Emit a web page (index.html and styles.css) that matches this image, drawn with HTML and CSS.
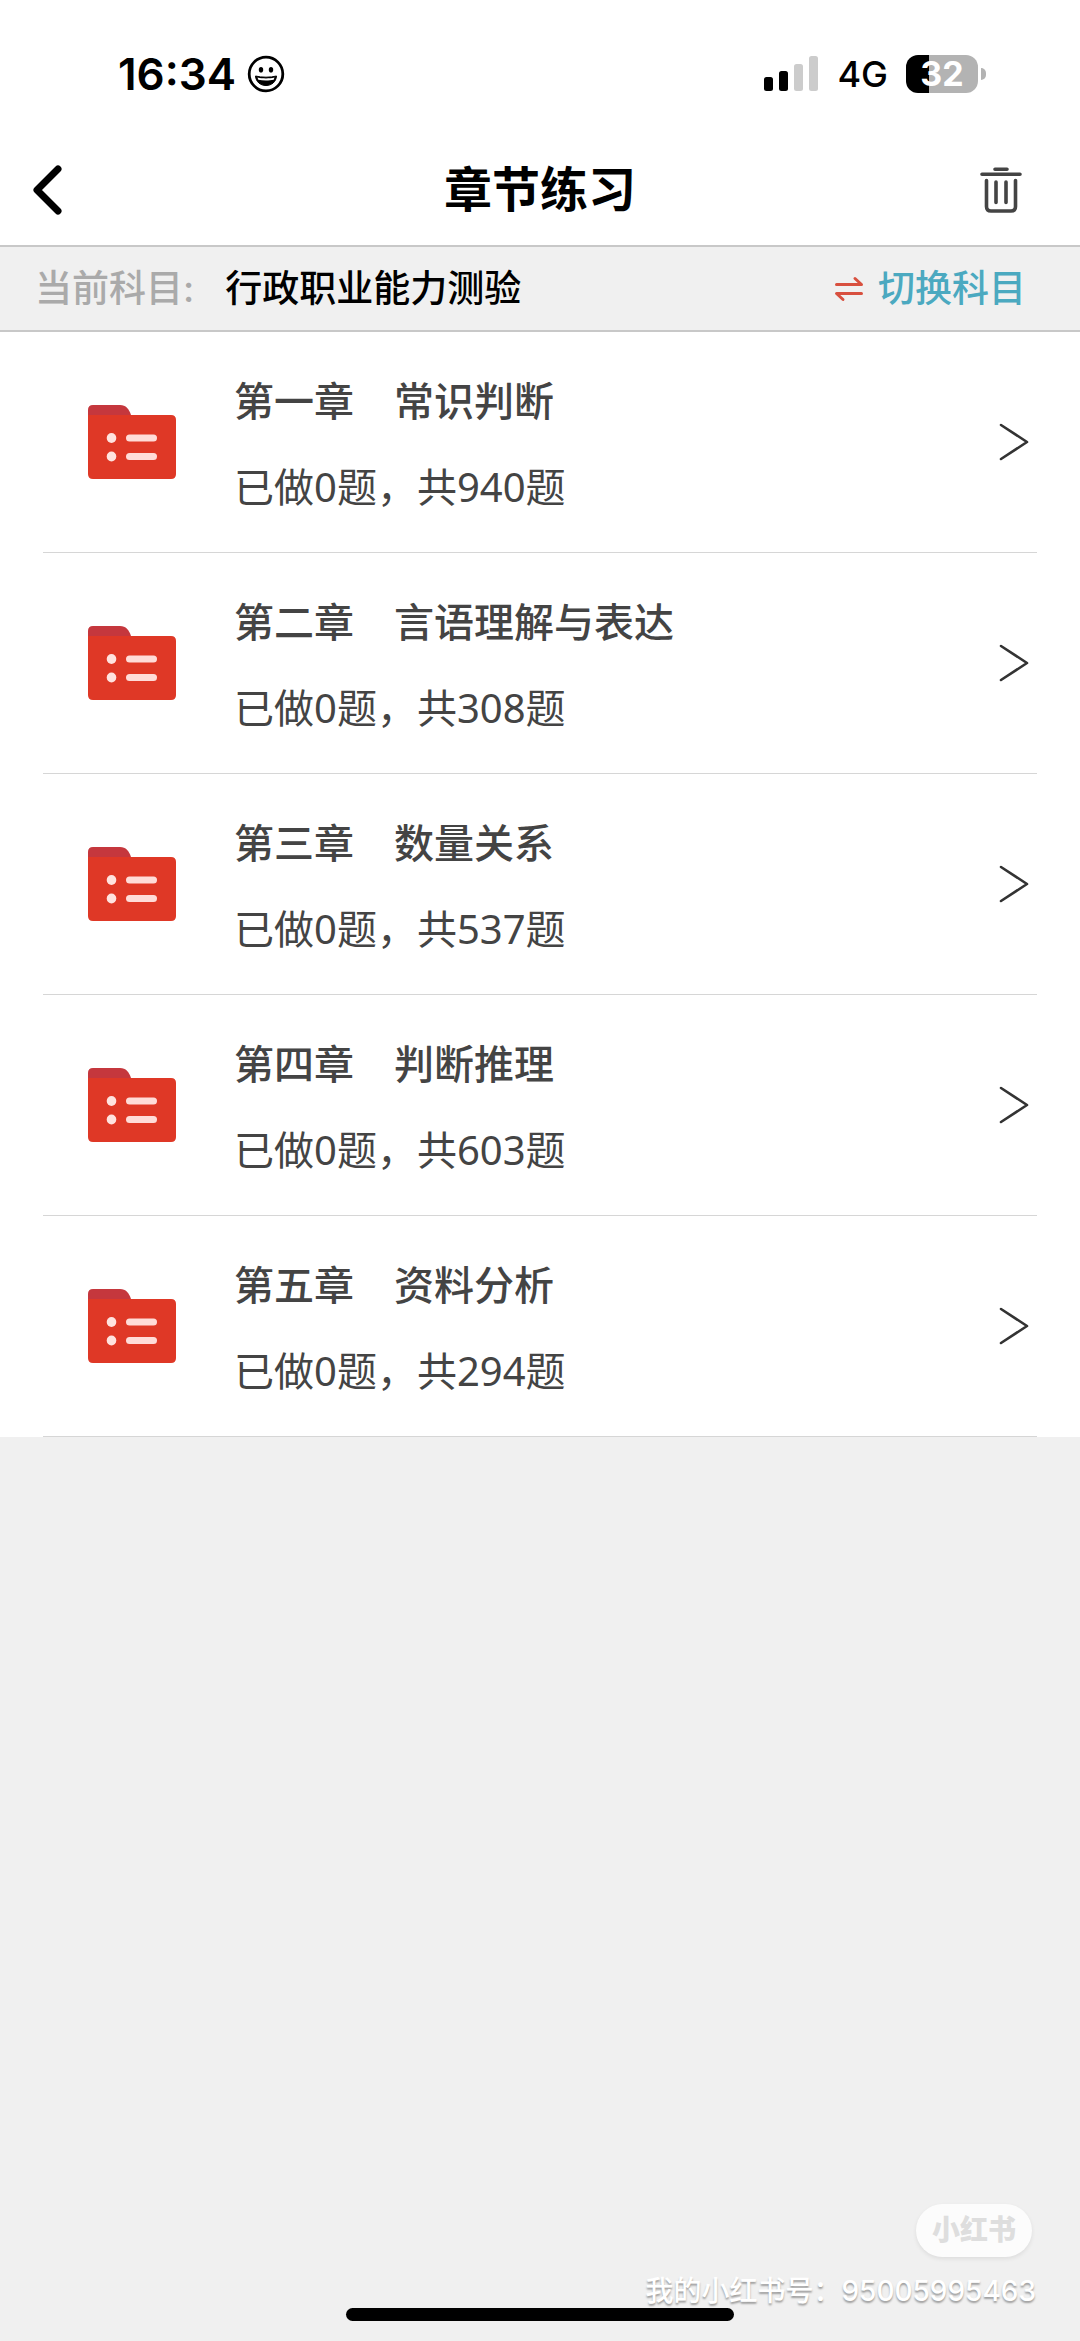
FILE: index.html
```
<!DOCTYPE html>
<html lang="zh-CN">
<head>
    <meta charset="UTF-8">
    <meta name="viewport" content="width=device-width, initial-scale=1.0">
    <title>章节练习</title>
    <link rel="stylesheet" href="styles.css">
</head>
<body>

    <header class="top">
        <div class="status-bar">
            <div class="status-left">
                <span class="time">16:34</span>
                <svg width="38" height="38" viewBox="0 0 38 38" fill="none">
                    <circle cx="19" cy="19" r="16.8" stroke="#000" stroke-width="2.8"/>
                    <ellipse cx="14" cy="14.8" rx="2.2" ry="2.8" fill="#000"/>
                    <ellipse cx="24" cy="14.8" rx="2.2" ry="2.8" fill="#000"/>
                    <path d="M8.5 21c6 1.6 15 1.6 21 0-.5 6-5 9.500-10.500 9.500S9 27 8.500 21z" fill="#000" stroke="#000" stroke-linejoin="round"/>
                    <path d="M10.500 22.500c5 1.200 12 1.200 17 0l-.8 2.200c-4.500 1-10.900 1-15.400 0z" fill="#fff"/>
                </svg>
            </div>
            <div class="status-right">
                <svg width="55" height="36" viewBox="0 0 55 36">
                    <rect x="0" y="21" width="9" height="14" rx="2.500"/>
                    <rect x="15" y="15" width="9" height="20" rx="2.500"/>
                    <rect x="30" y="8" width="9" height="27" rx="2.500" fill="#ccc"/>
                    <rect x="45" y="0" width="9" height="35" rx="2.500" fill="#ccc"/>
                </svg>
                <span class="network">4G</span>
                <div class="battery"><span class="battery-level">32</span></div>
            </div>
        </div>

        <div class="nav-bar">
            <button class="icon-btn" type="button" aria-label="返回">
                <svg width="32" height="52" viewBox="0 0 32 52" fill="none" stroke="#000" stroke-width="7" stroke-linecap="round" stroke-linejoin="round">
                    <path d="M26 5L5 26l21 21"/>
                </svg>
            </button>
            <h1>章节练习</h1>
            <button class="icon-btn icon-btn-right" type="button" aria-label="清空">
                <svg width="42" height="46" viewBox="0 0 42 46" fill="none" stroke="#444" stroke-width="3.600" stroke-linecap="round" stroke-linejoin="round">
                    <path d="M15 2.300h12M2 7.300h38"/>
                    <path d="M6.500 13.500v26q0 4.500 4.500 4.500h20q4.500 0 4.500-4.500v-26"/>
                    <path d="M16 15v20.500M26 15v20.500"/>
                </svg>
            </button>
        </div>
    </header>

    <section class="subject-bar">
        <span class="subject-label">当前科目:</span>
        <strong class="subject-name">行政职业能力测验</strong>
        <a class="switch" href="#">
            <svg width="28" height="26" viewBox="0 0 28 26" fill="none" stroke="#d8503f" stroke-width="3" stroke-linecap="round" stroke-linejoin="round">
                <path d="M1.500 8.500h25l-6.500-6"/>
                <path d="M26.500 17.500h-25l6.500 6"/>
            </svg>
            切换科目
        </a>
    </section>

    <main>
        <ul class="chapter-list">
            <li>
                <a class="chapter" href="#">
                    <svg class="folder" viewBox="0 0 88 75"><use href="#folder"/></svg>
                    <div class="chapter-info">
                        <h2>第一章　常识判断</h2>
                        <p>已做0题，共940题</p>
                    </div>
                    <svg class="arrow" viewBox="0 0 30 38"><use href="#arrow"/></svg>
                </a>
            </li>
            <li>
                <a class="chapter" href="#">
                    <svg class="folder" viewBox="0 0 88 75"><use href="#folder"/></svg>
                    <div class="chapter-info">
                        <h2>第二章　言语理解与表达</h2>
                        <p>已做0题，共308题</p>
                    </div>
                    <svg class="arrow" viewBox="0 0 30 38"><use href="#arrow"/></svg>
                </a>
            </li>
            <li>
                <a class="chapter" href="#">
                    <svg class="folder" viewBox="0 0 88 75"><use href="#folder"/></svg>
                    <div class="chapter-info">
                        <h2>第三章　数量关系</h2>
                        <p>已做0题，共537题</p>
                    </div>
                    <svg class="arrow" viewBox="0 0 30 38"><use href="#arrow"/></svg>
                </a>
            </li>
            <li>
                <a class="chapter" href="#">
                    <svg class="folder" viewBox="0 0 88 75"><use href="#folder"/></svg>
                    <div class="chapter-info">
                        <h2>第四章　判断推理</h2>
                        <p>已做0题，共603题</p>
                    </div>
                    <svg class="arrow" viewBox="0 0 30 38"><use href="#arrow"/></svg>
                </a>
            </li>
            <li>
                <a class="chapter" href="#">
                    <svg class="folder" viewBox="0 0 88 75"><use href="#folder"/></svg>
                    <div class="chapter-info">
                        <h2>第五章　资料分析</h2>
                        <p>已做0题，共294题</p>
                    </div>
                    <svg class="arrow" viewBox="0 0 30 38"><use href="#arrow"/></svg>
                </a>
            </li>
        </ul>
    </main>

    <footer class="footer">
        <span class="badge">小红书</span>
        <p class="account">我的小红书号：95005995463</p>
        <div class="home-indicator"></div>
    </footer>

    <!-- shared icons -->
    <svg class="sprite" width="0" height="0" aria-hidden="true">
        <symbol id="folder" viewBox="0 0 88 75">
            <path d="M0 16V5q0-5 5-5h27c6 0 9 4 11 10v6z" fill="#c5373d"/>
            <path d="M0 10h83q5 0 5 5v54q0 5-5 5H5q-5 0-5-5z" fill="#df3826"/>
            <ellipse cx="23.500" cy="33" rx="4.800" ry="5" fill="#ffe3df"/>
            <ellipse cx="23.500" cy="51.500" rx="4.800" ry="5" fill="#ffe3df"/>
            <rect x="38" y="29.500" width="31" height="7" rx="3.500" fill="#ffdcd8"/>
            <rect x="38" y="48" width="31" height="7" rx="3.500" fill="#ffdcd8"/>
        </symbol>
        <symbol id="arrow" viewBox="0 0 30 38">
            <path d="M2 2l26 17L2 36" fill="none" stroke="#333" stroke-width="2.600" stroke-linecap="round" stroke-linejoin="round"/>
        </symbol>
    </svg>

</body>
</html>
```
FILE: styles.css
```
:root {
    --background-color: #f0f0f0;
    --card-background: #ffffff;
    --text-color: #444;
    --subtle-text-color: #aaa;
    --border-color: #c8c8c8;
    --line-color: #d6d6d6;
    --link-color: #4ba9c0;
}

* {
    box-sizing: border-box;
    margin: 0;
    padding: 0;
}

body {
    font-family: Inter, 'Noto Sans CJK SC', sans-serif;
    background-color: var(--background-color);
    color: var(--text-color);
    display: flex;
    flex-direction: column;
    min-height: 100vh;
}

a {
    color: inherit;
    text-decoration: none;
}

svg {
    display: block;
    flex-shrink: 0;
}

.sprite {
    position: absolute;
}

.top {
    background-color: var(--card-background);
    color: #000;
}

/* status bar */
.status-bar {
    display: flex;
    justify-content: space-between;
    align-items: center;
    padding: 44px 102px 30px 118px;
}

.status-left,
.status-right {
    display: flex;
    align-items: center;
    line-height: 60px;
}

.status-left {
    gap: 11px;
}

.status-right {
    gap: 18px;
}

.time {
    font-size: 44px;
    font-weight: 600;
}

.network {
    font-size: 36px;
    font-weight: 500;
}

.battery {
    position: relative;
}

.battery::after {
    content: "";
    position: absolute;
    left: calc(100% + 3px);
    top: 50%;
    width: 5px;
    height: 12px;
    margin-top: -6px;
    border-radius: 0 6px 6px 0;
    background-color: #b3b3b3;
}

.battery-level {
    display: block;
    width: 72px;
    border-radius: 12px;
    background: linear-gradient(to right, #000 32%, #b3b3b3 32%);
    color: #fff;
    font-size: 34px;
    font-weight: 700;
    line-height: 38px;
    text-align: center;
}

/* nav bar */
.nav-bar {
    display: grid;
    grid-template-columns: 1fr auto 1fr;
    align-items: center;
    padding: 20px 32px;
}

.nav-bar h1 {
    font-size: 48px;
    font-weight: 700;
    line-height: 71px;
}

.icon-btn {
    justify-self: start;
    border: none;
    background: none;
    cursor: pointer;
}

.icon-btn-right {
    justify-self: end;
    padding-right: 26px;
}

/* current subject */
.subject-bar {
    display: flex;
    align-items: center;
    padding: 13px 54px 12px 35px;
    border-top: 2px solid var(--border-color);
    border-bottom: 2px solid var(--border-color);
    font-size: 37px;
    font-weight: 500;
    line-height: 58px;
}

.subject-label {
    color: var(--subtle-text-color);
}

.subject-name {
    margin-left: 31px;
    color: #000;
    font-weight: 500;
}

.switch {
    display: flex;
    align-items: center;
    gap: 15px;
    margin-left: auto;
    color: var(--link-color);
}

/* chapters */
.chapter-list {
    list-style: none;
    background-color: var(--card-background);
    padding: 0 43px;
}

.chapter {
    display: flex;
    align-items: center;
    padding: 35px 8px 35px 45px;
    border-bottom: 1px solid var(--line-color);
}

.folder {
    width: 88px;
    height: 75px;
}

.chapter-info {
    flex: 1;
    margin-left: 58px;
    padding-top: 5px;
    display: flex;
    flex-direction: column;
    gap: 25px;
    font-size: 40px;
    line-height: 60px;
}

.chapter-info h2 {
    font-size: 40px;
    font-weight: 500;
}

.chapter-info p {
    font-family: 'Noto Sans', 'Noto Sans CJK SC', sans-serif;
    font-weight: 400;
}

.arrow {
    width: 30px;
    height: 38px;
}

/* bottom */
.footer {
    display: flex;
    flex-direction: column;
    align-items: flex-end;
    margin-top: auto;
    padding: 0 44px 20px;
}

.badge {
    margin-right: 4px;
    padding: 0 16px;
    border-radius: 27px;
    background-color: #fcfcfc;
    box-shadow: 0 2px 4px rgba(0, 0, 0, 0.08);
    color: #dedede;
    font-size: 28px;
    font-weight: 900;
    line-height: 53px;
}

.account {
    margin-top: 17px;
    color: #fff;
    font-size: 28px;
    font-weight: 500;
    line-height: 34px;
    text-shadow: 0 2px 2px rgba(0, 0, 0, 0.35);
}

.home-indicator {
    align-self: center;
    width: 36vw;
    height: 13px;
    border-radius: 7px;
    background-color: #000;
}
```
